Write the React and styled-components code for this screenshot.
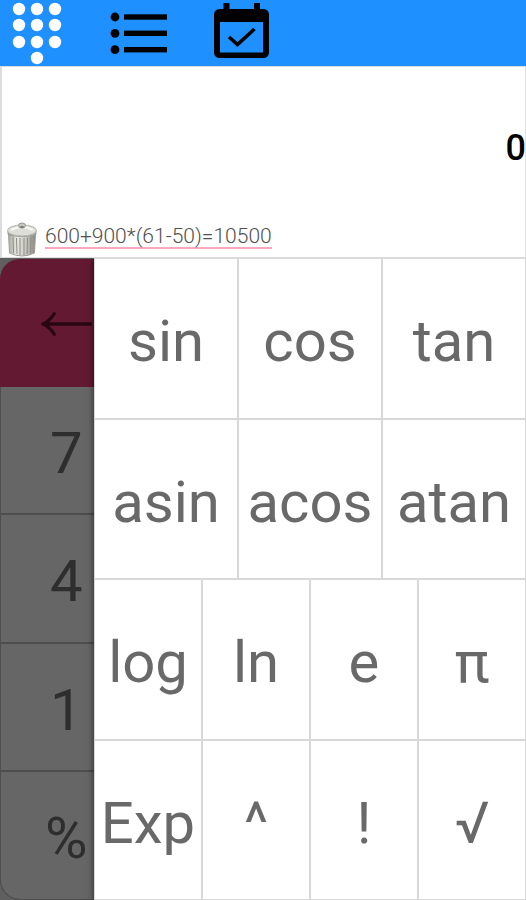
import React from "react";
import styled, { createGlobalStyle, css } from "styled-components";

const GlobalStyle = createGlobalStyle`
  *, *::before, *::after { box-sizing: border-box; }
  body { margin: 0; background: #fff; font-family: Roboto, "Liberation Sans", sans-serif; }
  button { margin: 0; padding: 0; border: 0; background: none; font: inherit; color: inherit; cursor: pointer; }
`;

const Screen = styled.main`
  display: flex;
  flex-direction: column;
  min-height: 100vh;
`;

const TopBar = styled.nav`
  display: flex;
  height: 66px;
  padding-left: 8px;
  gap: 42px;
  background: #1e90ff;
`;

const TabButton = styled.button`
  width: 60px;
  height: 66px;
  color: ${(p) => (p.$active ? "#fff" : "#000")};

  svg { display: block; }
`;

const Display = styled.section`
  display: flex;
  flex-direction: column;
  height: 192px;
  border-top: 1px solid #dcdcdc;
  border-bottom: 1px solid #dcdcdc;
  box-shadow: inset 2px 0 #dcdcdc, inset -1px 0 #e2e2e2;
`;

const Result = styled.output`
  flex: 1;
  display: flex;
  align-items: center;
  justify-content: flex-end;
  padding-top: 6px;
  font-size: 36px;
  line-height: 44px;
  font-weight: 500;
  color: #000;
`;

const History = styled.div`
  display: flex;
  align-items: flex-end;
  height: 35px;
  padding-left: 6px;
  gap: 7px;
`;

const TrashButton = styled.button`
  width: 32px;
  height: 35px;

  svg { display: block; }
`;

const HistoryEntry = styled.button`
  margin-bottom: 8px;
  border-bottom: 2px solid #f9a9bf;
  font-size: 21px;
  line-height: 22px;
  font-weight: 300;
  color: #505050;
`;

const PadArea = styled.section`
  position: relative;
  flex: 1;
  display: flex;
  overflow: hidden;
  background: #ededed;
`;

const BasicPad = styled.div`
  flex: 1;
  display: grid;
  grid-template-columns: 25%;
  grid-template-rows: repeat(5, 1fr);
  overflow: hidden;
  margin-top: 1px;
  border-radius: 20px 0 0 20px;
  background: #fff;
  box-shadow: inset 0 0 0 1px #c4c4c4;
`;

const keyText = css`
  display: flex;
  align-items: center;
  justify-content: center;
  padding-top: 6px;
  font-size: 58px;
  line-height: 68px;
  color: #696969;
`;

const BasicKey = styled.button`
  ${keyText}
  border: solid #c4c4c4;
  border-width: 0 0 2px 1px;
  color: #747474;

  &:last-child { border-bottom-width: 1px; border-bottom-left-radius: 20px; }
`;

const BackKey = styled.button`
  display: flex;
  align-items: center;
  justify-content: center;
  padding: 2px 0 0 2px;
  background: #fb4080;
  color: #66102c;
`;

const Backdrop = styled.div`
  position: absolute;
  inset: 0;
  background: rgba(0, 0, 0, 0.6);
`;

const Drawer = styled.div`
  position: absolute;
  inset: 0 0 0 94px;
  display: grid;
  grid-template-columns: repeat(12, 1fr);
  grid-template-rows: repeat(4, 1fr);
  background: #fff;
  box-shadow: -1px 1px 6px rgba(0, 0, 0, 0.5);
`;

const FunctionKey = styled.button`
  ${keyText}
  grid-column: span ${(p) => p.$span};
  min-width: 0;
  border: 1px solid #d8d8d8;
`;

const DialIcon = () => (
  <svg width="60" height="66" fill="currentColor" aria-hidden="true">
    {[9, 25, 42].map((y) =>
      [11, 29, 47].map((x) => <circle key={`${x}-${y}`} cx={x} cy={y} r="6.2" />)
    )}
    <circle cx="29" cy="58" r="6.2" />
  </svg>
);

const ListIcon = () => (
  <svg width="60" height="66" fill="currentColor" aria-hidden="true">
    {[17, 33.3, 49.7].map((y) => (
      <g key={y}>
        <circle cx="5" cy={y} r="4.4" />
        <rect x="14" y={y - 2.7} width="43" height="5.4" />
      </g>
    ))}
  </svg>
);

const CalendarIcon = () => (
  <svg width="60" height="66" fill="none" stroke="currentColor" aria-hidden="true">
    <path
      fill="currentColor"
      stroke="none"
      fillRule="evenodd"
      d="M11.500 3h6v6h24.500v-6h6v6h3.500a5.500 5.500 0 0 1 5.500 5.500v38a5.500 5.500 0 0 1-5.500 5.500H7.500a5.500 5.500 0 0 1-5.500-5.500v-38a5.500 5.500 0 0 1 5.500-5.500h4zM8 22v30.500h43v-30.500z"
    />
    <path d="M17 37l8.500 7.500l17-15.500" strokeWidth="3.600" />
  </svg>
);

const TrashIcon = () => (
  <svg width="32" height="36" aria-hidden="true">
    <defs>
      <linearGradient id="can">
        <stop offset="0" stopColor="#a9a9a2" />
        <stop offset="0.3" stopColor="#e9e9e3" />
        <stop offset="0.65" stopColor="#c9c9c2" />
        <stop offset="1" stopColor="#85857f" />
      </linearGradient>
    </defs>
    <path d="M2.500 11l1 20q12.500 6 25 0l1-20z" fill="url(#can)" stroke="#9d9d97" />
    <path
      d="M7 15l.5 16M10.500 16l.5 16M14 16v17M18 16v17M21.500 16l-.5 16M25 15l-.5 16"
      stroke="#8b8b85"
      strokeWidth="1"
    />
    <path d="M1.500 9v3c1 4 28 4 29 0v-3z" fill="#9c9c96" />
    <ellipse cx="16" cy="8.500" rx="14.500" ry="5.500" fill="#deded8" stroke="#b5b5af" />
    <path d="M5 8q11-6 22 0" fill="none" stroke="#f8f8f4" strokeWidth="2" />
    <ellipse cx="16" cy="3.500" rx="3.500" ry="2.500" fill="#c5c5be" stroke="#96968f" />
    <ellipse cx="16" cy="5" rx="2" ry="1" fill="#76766f" />
  </svg>
);

const BackArrow = () => (
  <svg width="52" height="28" fill="none" stroke="currentColor" strokeWidth="3.400" aria-hidden="true">
    <path d="M2 14H51M14 2.500Q9 11 2 14Q9 17 14 25.500" />
  </svg>
);

const tabs = [
  { label: "Calculator", Icon: DialIcon },
  { label: "List", Icon: ListIcon },
  { label: "Calendar", Icon: CalendarIcon },
];

const basicKeys = ["7", "4", "1", "%"];

const functionRows = [
  ["sin", "cos", "tan"],
  ["asin", "acos", "atan"],
  ["log", "ln", "e", "π"],
  ["Exp", "^", "!", "√"],
];

export default function App() {
  return (
    <Screen>
      <GlobalStyle />
      <TopBar>
        {tabs.map(({ label, Icon }, i) => (
          <TabButton key={label} type="button" aria-label={label} $active={i === 0}>
            <Icon />
          </TabButton>
        ))}
      </TopBar>
      <Display>
        <Result>0</Result>
        <History>
          <TrashButton type="button" aria-label="Clear history">
            <TrashIcon />
          </TrashButton>
          <HistoryEntry type="button">600+900*(61-50)=10500</HistoryEntry>
        </History>
      </Display>
      <PadArea>
        <BasicPad>
          <BackKey type="button" aria-label="Backspace">
            <BackArrow />
          </BackKey>
          {basicKeys.map((key) => (
            <BasicKey key={key} type="button">{key}</BasicKey>
          ))}
        </BasicPad>
        <Backdrop />
        <Drawer>
          {functionRows.flatMap((row) =>
            row.map((name) => (
              <FunctionKey key={name} type="button" $span={12 / row.length}>
                {name}
              </FunctionKey>
            ))
          )}
        </Drawer>
      </PadArea>
    </Screen>
  );
}
